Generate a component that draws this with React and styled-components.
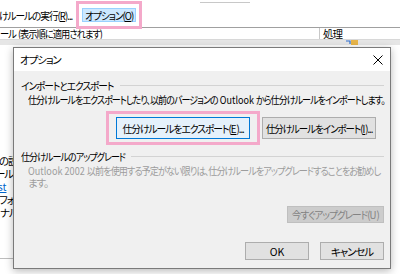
import styled, { createGlobalStyle } from "styled-components";

const Global = createGlobalStyle`
  html, body { margin: 0; padding: 0; background: #fff; }
  body {
    font-family: "Noto Sans CJK JP", "Noto Sans", sans-serif;
    font-feature-settings: "palt";
    color: #000;
  }
`;

const Screen = styled.div`
  position: relative;
  width: 400px;
  height: 274px;
  overflow: hidden;
  background: #fff;
  font-size: 10.5px;
  letter-spacing: -1.1px;
`;

/* Meiryo UI is much narrower than Noto CJK: squeeze runs of text.
   $trim gives back the width the squeeze saves, so flow stays right. */
const Narrow = styled.span`
  display: inline-block;
  white-space: nowrap;
  transform: scaleX(${(p) => p.$s || 1});
  transform-origin: ${(p) => p.$o || "left"} center;
  margin-right: ${(p) => p.$trim || 0}px;
`;

const Lat = styled.span`
  letter-spacing: 0;
  white-space: pre;
`;

const TopStrip = styled.div`
  height: 3px;
  display: flex;
`;

const StripEdge = styled.div`
  margin-left: 200px;
  width: 50px;
  border-bottom: 1px solid #c8c8c8;
`;

const Toolbar = styled.div`
  height: 24px;
  display: flex;
  align-items: center;
`;

const ToolText = styled.div`
  width: 77px;
  white-space: nowrap;
  margin-left: -1px;
`;

const Highlight = styled.div`
  padding: 4px 3px;
  border: 3px solid #f4a9ca;
  display: flex;
`;

const MenuButton = styled.div`
  width: 54px;
  height: 14px;
  box-sizing: border-box;
  display: flex;
  align-items: center;
  justify-content: center;
  background: #cce8ff;
  border: 1px solid #99d1ff;
  white-space: nowrap;
`;

const HeaderRow = styled.div`
  height: 11px;
  display: flex;
  align-items: center;
  border-top: 1px solid #a0a0a0;
  border-bottom: 1px solid #d8d8d8;
  line-height: 11px;
`;

const HeaderCell = styled.div`
  width: ${(p) => p.$w || "auto"};
  flex: ${(p) => (p.$w ? "none" : 1)};
  padding-left: ${(p) => p.$pad || 0}px;
  border-left: ${(p) => (p.$sep ? "1px solid #c8c8c8" : "none")};
  white-space: nowrap;
  overflow: hidden;
`;

const SubBand = styled.div`
  height: 5px;
  background: #e6e6e6;
  display: flex;
  padding-left: 346px;
`;

const MiniIcon = styled.svg`
  display: block;
`;

const ListArea = styled.div`
  padding-top: 109px;
  display: flex;
  flex-direction: column;
`;

const SideLine = styled.div`
  height: 0;
  border-top: 1px solid #bdbdbd;
  width: 14px;
  margin-top: ${(p) => p.$mt || 0}px;
`;

const SideText = styled.div`
  height: 13px;
  line-height: 13px;
  white-space: nowrap;
  margin-left: ${(p) => p.$ml || 0}px;
  color: ${(p) => (p.$link ? "#0066cc" : "#000")};
  text-decoration: ${(p) => (p.$link ? "underline" : "none")};
`;

const Dialog = styled.div`
  position: absolute;
  left: 13px;
  top: 47px;
  width: 376px;
  height: 220px;
  border: 1px solid #7a7a7a;
  background: #f0f0f0;
  box-shadow: 0 2px 8px rgba(0, 0, 0, 0.28);
  display: flex;
  flex-direction: column;
`;

const TitleBar = styled.div`
  height: 23px;
  background: #fff;
  display: flex;
  align-items: center;
  justify-content: space-between;
  padding: 0 7px 0 6px;
`;

const Body = styled.div`
  flex: 1;
  padding: 7px 6px 0 7px;
  display: flex;
  flex-direction: column;
`;

const GroupHead = styled.div`
  display: flex;
  align-items: center;
  gap: 6px;
  height: 14px;
  white-space: nowrap;
  margin-top: ${(p) => p.$mt || 0}px;
  &::after {
    content: "";
    flex: 1;
    border-top: 1px solid #d3d3d3;
    margin-top: 1px;
  }
`;

const Desc = styled.div`
  margin: 2px 0 0 7px;
  line-height: 12px;
  white-space: nowrap;
  color: ${(p) => (p.$muted ? "#9d9d9d" : "#000")};
`;

const ButtonRow = styled.div`
  display: flex;
  align-items: center;
  justify-content: flex-end;
  gap: ${(p) => p.$gap || 0}px;
  margin-top: ${(p) => p.$mt || 0}px;
  padding-right: ${(p) => p.$pr || 0}px;
`;

const Focus = styled.div`
  padding: 3px 7px;
  border: 3px solid #f4a9ca;
  display: flex;
`;

const Button = styled.div`
  height: ${(p) => p.$h || 20}px;
  width: ${(p) => (p.$w ? `${p.$w}px` : "auto")};
  box-sizing: border-box;
  display: flex;
  align-items: center;
  justify-content: center;
  white-space: nowrap;
  background: ${(p) => (p.$focus ? "#e5f1fb" : p.$disabled ? "#cccccc" : "#e1e1e1")};
  border: 1px solid ${(p) => (p.$focus ? "#0078d7" : p.$disabled ? "#bfbfbf" : "#adadad")};
  color: ${(p) => (p.$disabled ? "#838383" : "#000")};
`;

const U = styled.span`
  text-decoration: underline;
`;

const Close = () => (
  <svg width="10" height="10" viewBox="0 0 10 10">
    <path d="M0.5 0.5 L9.5 9.5 M9.5 0.5 L0.5 9.5" stroke="#000" strokeWidth="1" />
  </svg>
);

export default function App() {
  return (
    <>
      <Global />
      <Screen>
        <TopStrip>
          <StripEdge />
        </TopStrip>
        <Toolbar>
          <ToolText>
            <Narrow $s={0.92}>
              けルールの実行(<U>R</U>)...
            </Narrow>
          </ToolText>
          <Highlight>
            <MenuButton>
              <Narrow $s={0.92} $o="center">
                オプション(<U>O</U>)
              </Narrow>
            </MenuButton>
          </Highlight>
        </Toolbar>
        <HeaderRow>
          <HeaderCell $w="319px">
            <Narrow $s={0.88}>
              ール<Lat> </Lat>(表示順に適用されます)
            </Narrow>
          </HeaderCell>
          <HeaderCell $sep $pad={3}>
            処理
          </HeaderCell>
        </HeaderRow>
        <SubBand>
          <MiniIcon width="12" height="5" viewBox="0 0 12 5">
            <rect x="5" y="0" width="7" height="5" fill="#e8b54a" />
            <path d="M0 1 L4 1 L4 4" stroke="#2f6fd0" strokeWidth="1.2" fill="none" />
          </MiniIcon>
        </SubBand>
        <ListArea>
          <SideText $ml={-1}>の説</SideText>
          <SideText $ml={-5}>ール</SideText>
          <SideText $ml={-8} $link>
            <Lat>est</Lat>
          </SideText>
          <SideText $ml={-1}>フォル</SideText>
          <SideText $ml={0}>ナル</SideText>
          <SideLine $mt={39} />
        </ListArea>

        <Dialog>
          <TitleBar>
            <span>オプション</span>
            <Close />
          </TitleBar>
          <Body>
            <GroupHead>
              <Narrow $s={0.92} $trim={-7}>
                インポートとエクスポート
              </Narrow>
            </GroupHead>
            <Desc>
              <Narrow $s={0.86}>
                仕分けルールをエクスポートしたり、以前のバージョンの<Lat> Outlook </Lat>から仕分けルールをインポートします。
              </Narrow>
            </Desc>
            <ButtonRow $mt={5} $gap={2} $pr={8}>
              <Focus>
                <Button $focus $h={22} $w={134}>
                  <Narrow $s={0.93} $o="center">
                    仕分けルールをエクスポート(<U><Lat>E</Lat></U>)...
                  </Narrow>
                </Button>
              </Focus>
              <Button $h={22} $w={114}>
                <Narrow $s={0.9} $o="center">
                  仕分けルールをインポート(<U><Lat>I</Lat></U>)...
                </Narrow>
              </Button>
            </ButtonRow>
            <GroupHead $mt={4}>
              <Narrow $s={0.86} $trim={-17}>
                仕分けルールのアップグレード
              </Narrow>
            </GroupHead>
            <Desc $muted>
              <Narrow $s={0.87}>
                <Lat>Outlook 2002 </Lat>以前を使用する予定がない限りは、仕分けルールをアップグレードすることをお勧めし
              </Narrow>
              <br />
              ます。
            </Desc>
            <ButtonRow $mt={17}>
              <Button $disabled $h={17} $w={97}>
                <Narrow $s={0.92} $o="center">
                  今すぐアップグレード(<Lat>U</Lat>)
                </Narrow>
              </Button>
            </ButtonRow>
            <ButtonRow $mt={19} $gap={11}>
              <Button $h={18} $w={64}>
                <Lat>OK</Lat>
              </Button>
              <Button $h={18} $w={64}>
                キャンセル
              </Button>
            </ButtonRow>
          </Body>
        </Dialog>
      </Screen>
    </>
  );
}
